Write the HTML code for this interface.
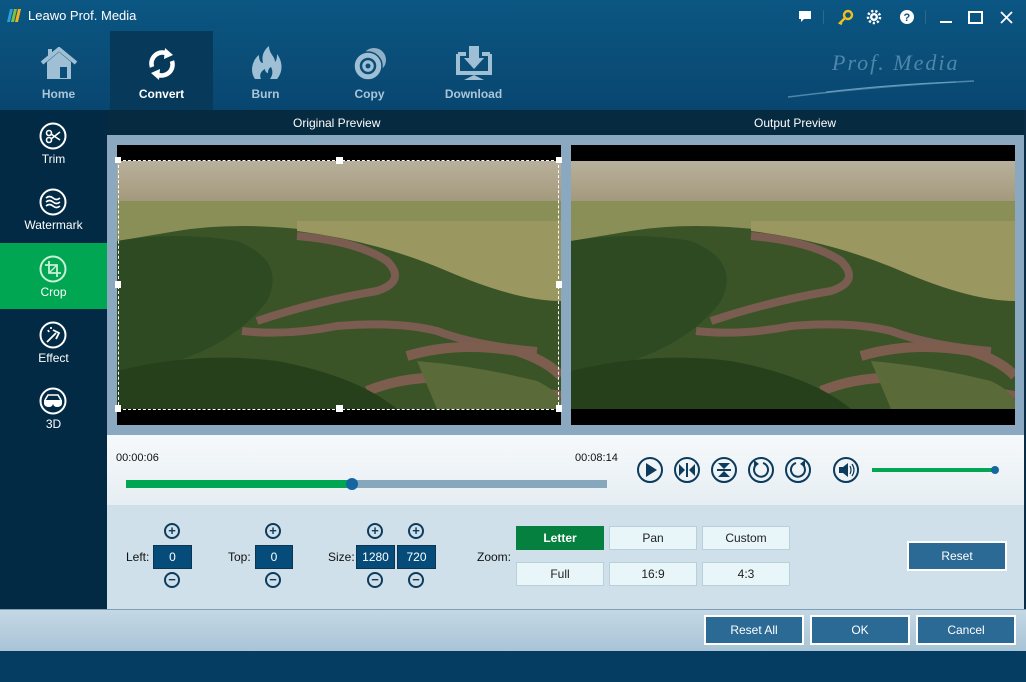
<!DOCTYPE html>
<html><head><meta charset="utf-8"><style>
*{margin:0;padding:0;box-sizing:border-box}
body{width:1026px;height:682px;position:relative;overflow:hidden;font-family:"Liberation Sans",sans-serif;background:#043d61}
.a{position:absolute}
.tb{left:0;top:0;width:1026px;height:110px;background:linear-gradient(#0b5683,#0a4d77 60%,#084670)}
.tab{top:31px;width:103px;height:79px;text-align:center;color:#a9c6d9;font-weight:bold;font-size:12px}
.tab span{position:absolute;left:0;right:0;top:56px}
.side{left:0;top:110px;width:107px;height:499px;background:#032a44}
.si{left:0;width:107px;height:66px;text-align:center;color:#fff;font-size:12px}
.si span{position:absolute;left:0;right:0;top:42px}
.si svg{position:absolute;left:39px;top:12px}
.btn{background:#2c6a96;border:2px solid #fff;color:#fff;font-size:12px;text-align:center;line-height:34px}
.zb{width:88px;height:24px;background:#e8f6fa;border:1px solid #b8d0da;font-size:12px;text-align:center;line-height:22px;color:#222}
.nb{height:24px;background:#064c7a;border:1px solid #0c3550;color:#fff;font-size:12px;text-align:center;line-height:22px}
.lbl{font-size:12px;color:#111}
.pm{width:16px;height:16px;border:2px solid #0d3b5c;border-radius:50%;color:#0d3b5c;font-size:13px;line-height:11px;text-align:center;font-weight:bold}
</style></head><body>
<div class="a tb"></div>
<svg class="a" style="left:6px;top:8px" width="16" height="15"><path d="M1 14L4 1H7L4 14Z" fill="#2aa0d8"/><path d="M5 14L8 1H11L8 14Z" fill="#7fc041"/><path d="M9 14L12 1H15L12 14Z" fill="#f2b21b"/></svg>
<div class="a" style="left:28px;top:8px;color:#fff;font-size:13px">Leawo Prof. Media</div>
<svg class="a" style="left:797px;top:9px" width="229" height="18">
<path d="M2 2h12v8H7l-3 3V10H2z" fill="#fff"/>
<rect x="26" y="1" width="1" height="14" fill="#2a6a90"/>
<circle cx="51" cy="6" r="4" fill="none" stroke="#f0c020" stroke-width="2.4"/><path d="M48 9l-5 5 2 1" stroke="#f0c020" stroke-width="2.4" fill="none"/>
<circle cx="77" cy="8" r="4" fill="#fff"/><circle cx="77" cy="8" r="6" fill="none" stroke="#fff" stroke-width="2.5" stroke-dasharray="2.2 2"/><circle cx="77" cy="8" r="1.6" fill="#0a4d77"/>
<circle cx="110" cy="8" r="7" fill="#fff"/><text x="106.5" y="12" font-size="11" font-weight="bold" fill="#0a4d77" font-family="Liberation Sans">?</text>
<rect x="128" y="1" width="1" height="14" fill="#2a6a90"/>
<rect x="143" y="12" width="12" height="2" fill="#fff"/>
<rect x="172" y="3" width="13" height="11" fill="none" stroke="#fff" stroke-width="2"/>
<path d="M204 3l11 11M215 3l-11 11" stroke="#fff" stroke-width="1.8"/>
</svg>
<div class="a" style="left:832px;top:50px;color:#4f86ab;font-family:'Liberation Serif',serif;font-style:italic;font-size:22px;letter-spacing:2px">Prof. Media</div>
<svg class="a" style="left:786px;top:78px" width="190" height="22"><path d="M2 19Q90 8 188 3" stroke="#4f86ab" stroke-width="1.5" fill="none"/><path d="M40 14Q110 6 170 4" stroke="#6b9ec0" stroke-width="1" fill="none"/></svg>

<div class="a tab" style="left:7px"><svg class="a" style="left:32px;top:16px" width="40" height="34"><path d="M3 16L20 2 37 16" stroke="#9fbfd4" stroke-width="4" fill="none"/><path d="M8 15v17h24V15L20 5z" fill="#9fbfd4"/><rect x="21" y="20" width="7" height="11" fill="#0a4d77"/><rect x="9" y="2" width="4" height="7" fill="#9fbfd4"/></svg><span>Home</span></div>
<div class="a tab" style="left:110px;background:#07395b;color:#fff"><svg class="a" style="left:36px;top:16px" width="32" height="34"><path d="M6 20A11 11 0 0 1 22 7" stroke="#fff" stroke-width="4.5" fill="none"/><path d="M19 1l8 7-9 4z" fill="#fff"/><path d="M26 14A11 11 0 0 1 10 27" stroke="#fff" stroke-width="4.5" fill="none"/><path d="M13 33l-8-7 9-4z" fill="#fff"/></svg><span>Convert</span></div>
<div class="a tab" style="left:214px"><svg class="a" style="left:35px;top:14px" width="34" height="36"><path d="M6 34C0 26 4 14 10 10c0 6 2 8 4 8C12 10 16 4 20 1c0 8 6 10 6 16 2-2 2-6 2-8 6 8 6 18 0 25z" fill="#9fbfd4"/><path d="M12 34c-2-4 0-8 4-10 0 3 2 4 3 4 0-3 1-5 3-6 2 4 2 8-1 12z" fill="#0a4d77"/></svg><span>Burn</span></div>
<div class="a tab" style="left:318px"><svg class="a" style="left:34px;top:15px" width="36" height="36"><circle cx="22" cy="14" r="12" fill="#8fb0c6"/><circle cx="16" cy="20" r="14" fill="#9fbfd4" stroke="#0a4d77" stroke-width="1.5"/><circle cx="16" cy="20" r="7" fill="none" stroke="#0a4d77" stroke-width="2.5"/><circle cx="16" cy="20" r="2.5" fill="#0a4d77"/></svg><span>Copy</span></div>
<div class="a tab" style="left:422px"><svg class="a" style="left:34px;top:15px" width="36" height="36"><path d="M2 8h8M26 8h8M2 8v19h32V8" stroke="#9fbfd4" stroke-width="4" fill="none"/><rect x="13" y="0" width="10" height="12" fill="#9fbfd4"/><path d="M8 12h20L18 23z" fill="#9fbfd4"/><path d="M8 34l10-5 10 5z" fill="#9fbfd4"/></svg><span>Download</span></div>

<div class="a side"></div>
<div class="a si" style="top:110px"><svg width="28" height="28"><circle cx="14" cy="14" r="12.5" fill="none" stroke="#fff" stroke-width="2"/><circle cx="10" cy="11" r="2.5" fill="none" stroke="#fff" stroke-width="1.6"/><circle cx="10" cy="18" r="2.5" fill="none" stroke="#fff" stroke-width="1.6"/><path d="M12 12l9 6M12 17l9-7" stroke="#fff" stroke-width="1.6"/></svg><span>Trim</span></div>
<div class="a si" style="top:176px"><svg width="28" height="28"><circle cx="14" cy="14" r="12.5" fill="none" stroke="#fff" stroke-width="2"/><path d="M7 10q3.5-3 7 0t7 0M7 14q3.5-3 7 0t7 0M7 18q3.5-3 7 0t7 0" stroke="#fff" stroke-width="1.6" fill="none"/></svg><span>Watermark</span></div>
<div class="a si" style="top:243px;background:#00a651"><svg width="28" height="28"><circle cx="14" cy="14" r="12.5" fill="none" stroke="#c8f0d8" stroke-width="2"/><path d="M10 6v12h12M6 10h12v12" stroke="#c8f0d8" stroke-width="1.8" fill="none"/><path d="M10 18l8-8" stroke="#c8f0d8" stroke-width="1.4"/></svg><span>Crop</span></div>
<div class="a si" style="top:309px"><svg width="28" height="28"><circle cx="14" cy="14" r="12.5" fill="none" stroke="#fff" stroke-width="2"/><path d="M8 21l9-9M14 9l6 3-3 6M9 9l1 2M12 6v2" stroke="#fff" stroke-width="1.8" fill="none"/></svg><span>Effect</span></div>
<div class="a si" style="top:375px"><svg width="28" height="28"><circle cx="14" cy="14" r="12.5" fill="none" stroke="#fff" stroke-width="2"/><path d="M6 13l3-5h10l3 5" stroke="#fff" stroke-width="1.6" fill="none"/><path d="M5 13h18v4q-1 3-5 3-3 0-4-3-1 3-4 3-4 0-5-3z" fill="#fff"/></svg><span>3D</span></div>

<div class="a" style="left:107px;top:110px;width:919px;height:25px;background:#062a40;color:#fff;font-size:12px"><span class="a" style="left:186px;top:6px">Original Preview</span><span class="a" style="left:647px;top:6px">Output Preview</span></div>
<div class="a" style="left:107px;top:135px;width:917px;height:300px;background:#8aa8bf"></div>
<div class="a" style="left:1024px;top:110px;width:2px;height:500px;background:#0a2c44"></div>

<svg width="0" height="0" class="a"><defs>
<linearGradient id="sky" x1="0" y1="0" x2="0" y2="1"><stop offset="0" stop-color="#b9b09c"/><stop offset="1" stop-color="#a39a7c"/></linearGradient>
<symbol id="land" viewBox="0 0 444 248" preserveAspectRatio="none">
<rect width="444" height="248" fill="#3a5428"/>
<rect width="444" height="40" fill="url(#sky)"/>
<path d="M0 40H444V110Q380 120 330 100 260 80 200 70 120 60 60 70L0 80z" fill="#8a8f58"/>
<path d="M180 70Q260 80 330 110 400 140 444 140V60H180z" fill="#9a9860"/>
<path d="M0 80Q60 70 120 80 170 100 150 140 120 180 60 200L0 210z" fill="#2e4a22"/>
<path d="M140 160Q200 140 260 130 290 120 270 100 240 80 180 75 M125 170Q170 175 220 165 280 160 320 170 360 185 420 190" stroke="#7a5c50" stroke-width="8" fill="none"/>
<path d="M290 195Q340 180 400 190 430 200 444 215 M250 230Q300 210 360 220 410 230 444 235" stroke="#7d5e4e" stroke-width="10" fill="none"/>
<path d="M0 210Q80 190 160 200 240 215 280 248H0z" fill="#27401c"/>
<path d="M300 200Q360 205 420 220 440 230 444 240V248H320z" fill="#5a6a38"/>
</symbol></defs></svg>

<div class="a" style="left:117px;top:145px;width:444px;height:280px;background:#000"></div>
<svg class="a" style="left:117px;top:161px" width="444" height="248"><use href="#land" x="0" y="0" width="444" height="248"/></svg>
<div class="a" style="left:118px;top:160px;width:441px;height:250px;border:1px dashed #fff"></div>
<div class="a" style="left:115px;top:157px;width:6px;height:6px;background:#fff"></div><div class="a" style="left:336px;top:157px;width:7px;height:7px;background:#fff"></div><div class="a" style="left:556px;top:157px;width:6px;height:6px;background:#fff"></div>
<div class="a" style="left:115px;top:281px;width:6px;height:7px;background:#fff"></div><div class="a" style="left:556px;top:281px;width:6px;height:7px;background:#fff"></div>
<div class="a" style="left:115px;top:405px;width:6px;height:7px;background:#fff"></div><div class="a" style="left:336px;top:405px;width:7px;height:7px;background:#fff"></div><div class="a" style="left:556px;top:405px;width:6px;height:7px;background:#fff"></div>
<div class="a" style="left:571px;top:145px;width:444px;height:280px;background:#000"></div>
<svg class="a" style="left:571px;top:161px" width="444" height="248"><use href="#land" x="0" y="0" width="444" height="248"/></svg>

<div class="a" style="left:107px;top:435px;width:917px;height:70px;background:linear-gradient(#f6f9fb,#e6eef3)"></div>
<div class="a lbl" style="left:116px;top:452px;font-size:11px">00:00:06</div>
<div class="a lbl" style="left:575px;top:452px;font-size:11px">00:08:14</div>
<div class="a" style="left:126px;top:480px;width:481px;height:8px;background:#87a7bd"></div>
<div class="a" style="left:126px;top:480px;width:226px;height:8px;background:#00a651"></div>
<div class="a" style="left:346px;top:478px;width:12px;height:12px;border-radius:50%;background:#1565a0"></div>
<svg class="a" style="left:636px;top:456px" width="180" height="30">
<g fill="none" stroke="#0d3b5c" stroke-width="2"><circle cx="14" cy="14" r="12"/><circle cx="51" cy="14" r="12"/><circle cx="88" cy="14" r="12"/><circle cx="125" cy="14" r="12"/><circle cx="162" cy="14" r="12"/>
<path d="M127 7a7 7 0 1 1-6 1M160 7a7 7 0 1 0 6 1"/></g>
<g fill="#0d3b5c"><path d="M10 7v14l11-7z"/><path d="M43 8v12l6-6zM59 8v12l-6-6z"/><rect x="50" y="7" width="2" height="14"/><path d="M82 7h12l-6 6zM82 21h12l-6-6z"/><rect x="81" y="13" width="14" height="2"/><path d="M118 4l5 4-5 3zM169 4l-5 4 5 3z"/></g></svg>
<svg class="a" style="left:832px;top:456px" width="30" height="30"><circle cx="14" cy="14" r="12" fill="none" stroke="#0d3b5c" stroke-width="2"/><path d="M7 11h4l5-4v14l-5-4H7z" fill="#0d3b5c"/><path d="M18 10q2 4 0 8M20 8q4 6 0 12" stroke="#0d3b5c" stroke-width="1.2" fill="none"/></svg>
<div class="a" style="left:872px;top:468px;width:123px;height:4px;background:#00a651"></div>
<div class="a" style="left:991px;top:466px;width:8px;height:8px;border-radius:50%;background:#1565a0"></div>

<div class="a" style="left:107px;top:505px;width:917px;height:104px;background:#cfe0ea"></div>
<div class="a pm" style="left:164px;top:523px">+</div><div class="a pm" style="left:164px;top:572px">−</div>
<div class="a lbl" style="left:126px;top:550px">Left:</div><div class="a nb" style="left:153px;top:545px;width:39px">0</div>
<div class="a pm" style="left:265px;top:523px">+</div><div class="a pm" style="left:265px;top:572px">−</div>
<div class="a lbl" style="left:228px;top:550px">Top:</div><div class="a nb" style="left:255px;top:545px;width:38px">0</div>
<div class="a pm" style="left:367px;top:523px">+</div><div class="a pm" style="left:367px;top:572px">−</div>
<div class="a pm" style="left:408px;top:523px">+</div><div class="a pm" style="left:408px;top:572px">−</div>
<div class="a lbl" style="left:328px;top:550px">Size:</div><div class="a nb" style="left:356px;top:545px;width:39px">1280</div><div class="a nb" style="left:397px;top:545px;width:39px">720</div>
<div class="a lbl" style="left:477px;top:550px">Zoom:</div>
<div class="a zb" style="left:516px;top:526px;background:#05803f;border-color:#05803f;color:#fff;font-weight:bold">Letter</div>
<div class="a zb" style="left:609px;top:526px">Pan</div><div class="a zb" style="left:702px;top:526px">Custom</div>
<div class="a zb" style="left:516px;top:562px">Full</div><div class="a zb" style="left:609px;top:562px">16:9</div><div class="a zb" style="left:702px;top:562px">4:3</div>
<div class="a btn" style="left:907px;top:541px;width:100px;height:30px;line-height:26px">Reset</div>

<div class="a" style="left:0;top:609px;width:1026px;height:42px;background:linear-gradient(#c4d8e5,#a9c4d6);border-top:1px solid #7e9eb6"></div>
<div class="a btn" style="left:704px;top:615px;width:100px;height:30px;line-height:26px">Reset All</div>
<div class="a btn" style="left:810px;top:615px;width:100px;height:30px;line-height:26px">OK</div>
<div class="a btn" style="left:916px;top:615px;width:100px;height:30px;line-height:26px">Cancel</div>
</body></html>
